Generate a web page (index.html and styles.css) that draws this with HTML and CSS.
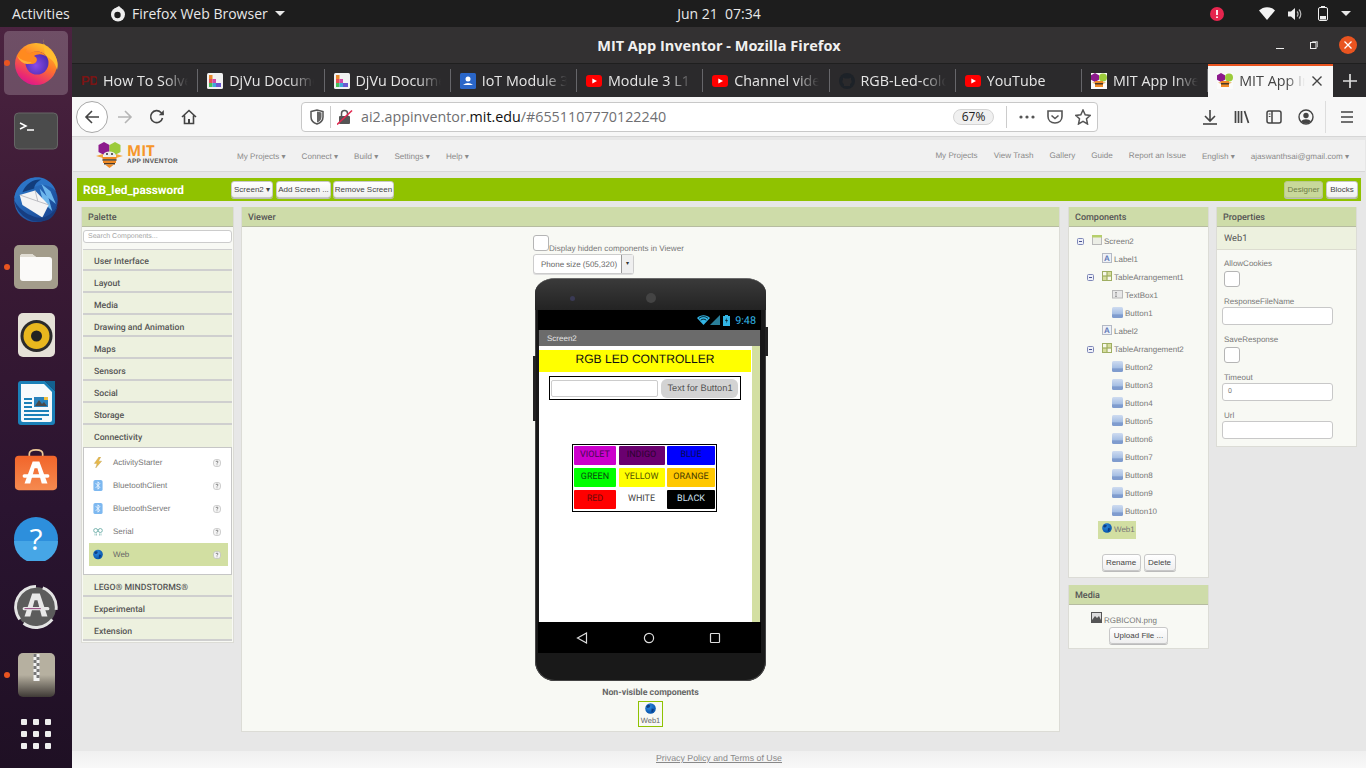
FILE: index.html
```html
<!DOCTYPE html>
<html lang="en">
<head>
<meta charset="utf-8">
<title>MIT App Inventor - Mozilla Firefox</title>
<link rel="stylesheet" href="styles.css">
</head>
<body>
<svg class="defs" width="0" height="0" aria-hidden="true">
  <defs>
    <linearGradient id="btnG" x1="0" y1="0" x2="0" y2="1"><stop offset="0" stop-color="#cfdcf0"/><stop offset=".65" stop-color="#a3bde3"/><stop offset=".7" stop-color="#7f9cce"/><stop offset="1" stop-color="#7f9cce"/></linearGradient>
    <radialGradient id="globeG" cx=".4" cy=".35" r=".7"><stop offset="0" stop-color="#2f8be0"/><stop offset="1" stop-color="#0350a8"/></radialGradient>
    <linearGradient id="ffBody" x1=".8" y1="0" x2=".3" y2="1"><stop offset="0" stop-color="#ffcf30"/><stop offset=".45" stop-color="#ff7a28"/><stop offset=".85" stop-color="#ea2a72"/><stop offset="1" stop-color="#d9168f"/></linearGradient>
    <radialGradient id="ffGlobe" cx=".45" cy=".6" r=".6"><stop offset="0" stop-color="#8a4be8"/><stop offset="1" stop-color="#4c2bb0"/></radialGradient>
    <linearGradient id="tbG" x1="0" y1="0" x2="1" y2="1"><stop offset="0" stop-color="#2f7fd0"/><stop offset="1" stop-color="#163f8c"/></linearGradient>
    <linearGradient id="swG" x1="0" y1="0" x2="0" y2="1"><stop offset="0" stop-color="#f2652a"/><stop offset="1" stop-color="#f58a50"/></linearGradient>
    <symbol id="i-btn" viewBox="0 0 11 11"><rect x="0" y="0" width="11" height="11" rx="1.500" fill="url(#btnG)"/></symbol>
    <symbol id="i-label" viewBox="0 0 10 10"><rect x=".5" y=".5" width="9" height="9" fill="#eef1f7" stroke="#b4b9c4"/><text x="5" y="8" class="i-label-a">A</text></symbol>
    <symbol id="i-table" viewBox="0 0 10 10"><rect width="10" height="10" fill="#9fae62"/><rect x="1" y="1" width="3.400" height="3.400" fill="#f7f7ea"/><rect x="5.600" y="1" width="3.400" height="3.400" fill="#d6de9c"/><rect x="1" y="5.600" width="3.400" height="3.400" fill="#d6de9c"/><rect x="5.600" y="5.600" width="3.400" height="3.400" fill="#f7f7ea"/></symbol>
    <symbol id="i-exp" viewBox="0 0 7 7"><rect x=".5" y=".5" width="6" height="6" rx="1" fill="#eef0f8" stroke="#7f88b8"/><path d="M2 3.500h3" stroke="#4b5590"/></symbol>
    <symbol id="i-globe" viewBox="0 0 11 11"><circle cx="5.500" cy="5.500" r="5.300" fill="url(#globeG)"/><path d="M3 1.600 5.400 2.600 4.600 4.600 2.400 5 1.200 3.600ZM6.600 5.600 9 6 8 8.600 6.400 9.600Z" fill="#0a2f70" opacity=".8"/></symbol>
    <symbol id="i-bt" viewBox="0 0 10 12"><rect width="10" height="12" rx="2" fill="#7db8f0"/><path d="M2.500 3.500 7 8 5 10V2L7 4 2.500 8.500" fill="none" stroke="#eef6ff" stroke-width="1"/></symbol>
    <symbol id="i-q" viewBox="0 0 8 8"><rect x=".5" y=".5" width="7" height="7" rx="2.500" fill="#f4f4f4" stroke="#bdbdbd" stroke-width=".7"/><path d="M3 3c0-1.300 2-1.300 2 0 0 .8-1 .7-1 1.600M4 5.500v.7" fill="none" stroke="#666" stroke-width=".8"/></symbol>
    <symbol id="i-yt" viewBox="0 0 16 12"><rect width="16" height="12" rx="3" fill="#f00"/><path d="M6.300 3.500 11 6 6.300 8.500Z" fill="#fff"/></symbol>
    <symbol id="i-djvu" viewBox="0 0 16 16"><rect width="16" height="16" rx="1.500" fill="#f1f1f1"/><rect x="2" y="2" width="3.500" height="4" fill="#e88a2e"/><rect x="2" y="6" width="3.500" height="4" fill="#e85050"/><rect x="5.500" y="6" width="3.500" height="4" fill="#d048a8"/><rect x="2" y="10" width="3.500" height="4" fill="#48c058"/><rect x="5.500" y="10" width="3.500" height="4" fill="#40a8d8"/><rect x="9" y="10" width="5" height="4" fill="#6a58d0"/></symbol>
    <symbol id="i-mit" viewBox="0 0 16 16"><rect width="16" height="16" fill="#fbfbfb"/><path d="M4 0 8 2.300V6.700L4 9 0 6.700V2.300Z" fill="#8d1a8d"/><circle cx="12" cy="4.500" r="4" fill="#9ccb3b"/><rect x="4" y="8" width="8" height="6" fill="#f08a24"/><rect x="4" y="10" width="8" height="1.500" fill="#4a3a2a"/><path d="M1 9.500 4 9V11ZM15 9.500 12 9V11Z" fill="#f0b060"/></symbol>
  </defs>
</svg>

<header class="topbar">
  <div class="top-left">
    <span class="activities">Activities</span>
    <span class="app-name">
      <svg class="app-ico" viewBox="0 0 16 16"><circle cx="8" cy="8.500" r="7" fill="#eee"/><circle cx="7.500" cy="9" r="3.200" fill="#1d1d1d"/><path d="M9 0 12 3 7 5 4 3Z" fill="#eee"/></svg>
      Firefox Web Browser
      <span class="caret"></span>
    </span>
  </div>
  <div class="clock">Jun 21&nbsp;&nbsp;07:34</div>
  <div class="top-right">
    <svg class="tray tray-err" viewBox="0 0 14 14"><circle cx="7" cy="7" r="7" fill="#e6254e"/><path d="M7 3v5M7 9.500v1.500" stroke="#fff" stroke-width="1.800"/></svg>
    <svg class="tray tray-wifi" viewBox="0 0 16 13"><path d="M0 3.500C4.500-1 11.500-1 16 3.500L8 13Z" fill="#f4f4f4"/></svg>
    <svg class="tray tray-vol" viewBox="0 0 15 14"><path d="M0 4.500H3L7 1V13L3 9.500H0Z" fill="#eee"/><path d="M9 4.500a3.500 3.500 0 0 1 0 5M11 2.500a6.500 6.500 0 0 1 0 9" fill="none" stroke="#bbb" stroke-width="1.200"/></svg>
    <svg class="tray tray-bat" viewBox="0 0 10 15"><path d="M3 0h4v1.500H3Z" fill="#eee"/><rect x=".5" y="1.500" width="9" height="13" rx="1.500" fill="#1d1d1d" stroke="#eee"/><rect x="2" y="10" width="6" height="3.500" fill="#eee"/></svg>
    <span class="caret caret-right"></span>
  </div>
</header>

<div class="desktop">
  <nav class="dock">
    <div class="dock-item dock-active running">
      <svg class="ic48 ff-ico" viewBox="0 0 48 48">
        <circle cx="24" cy="26" r="21" fill="url(#ffBody)"/>
        <path d="M31 1C30 8 38 10 42 16 46 22 46.500 27 45 32 43 24 39 20 33 18Z" fill="#ffbd30"/>
        <circle cx="25" cy="25" r="11.500" fill="url(#ffGlobe)"/>
        <path d="M5 18C8 12 12 10 15 11 13 13 14 15 17 16 23 11 31 13 35 19 30 15 25 16 22 18 27 20 25 26 20 26 14 26 8 24 5 18Z" fill="#ff8a1f"/>
        <path d="M5 18C9 22 14 24 20 24 16 28 9 26 5 18Z" fill="#ffb03a"/>
      </svg>
    </div>
    <div class="dock-item">
      <svg class="ic44" viewBox="0 0 44 44"><rect x=".5" y="4" width="43" height="36" rx="4" fill="#4b4b4b" stroke="#666"/><path d="M6 14l6 3-6 3" fill="none" stroke="#fff" stroke-width="1.500"/><path d="M13 21h7" stroke="#fff" stroke-width="1.500"/></svg>
    </div>
    <div class="dock-item">
      <svg class="ic48" viewBox="0 0 48 53">
        <circle cx="24" cy="28" r="24" fill="url(#tbG)"/>
        <path d="M0 26C2 10 16 0 30 3 38 5 44 11 46 18 38 10 30 10 23 13L6 21Z" fill="#2c74c6"/>
        <path d="M9 19C13 9 22 4 30 5 24 8 22 12 22 15Z" fill="#123d7c"/>
        <path d="M30 10 40 18 46 32 36 24ZM28 15 38 26 42 40 32 30Z" fill="#6db6ec"/>
        <path d="M6 22 23 17 38 33 31 47 9 33Z" fill="#f4f4f4"/>
        <path d="M6 22 26 29 38 33M26 29 23 17" fill="none" stroke="#a9a9b0" stroke-width=".8"/>
        <path d="M0 28C2 44 20 56 36 50 42 48 46 42 48 34 42 44 32 50 22 46 12 43 4 36 0 28Z" fill="#173d80"/>
      </svg>
    </div>
    <div class="dock-item running">
      <svg class="ic44" viewBox="0 0 44 44"><rect width="44" height="44" rx="5" fill="#a39c8b"/><path d="M6 12q0-3 3-3H18l4 3H35q3 0 3 3V33q0 3-3 3H9q-3 0-3-3Z" fill="#fbfaf9"/><path d="M6 12q0-3 3-3H18l4 3Z" fill="#e0dcd3"/></svg>
    </div>
    <div class="dock-item">
      <svg class="ic44 ic-narrow" viewBox="0 0 37 44"><rect width="37" height="44" rx="5" fill="#e5e1d7"/><circle cx="18.500" cy="23" r="16" fill="#2b2b2b"/><circle cx="18.500" cy="23" r="13" fill="#e8b71e"/><circle cx="18.500" cy="23" r="5.500" fill="#222"/></svg>
    </div>
    <div class="dock-item">
      <svg class="ic44 ic-narrow" viewBox="0 0 37 44"><path d="M3 0H27L37 10V41Q37 44 34 44H3Q0 44 0 41V3Q0 0 3 0Z" fill="#1b80b8"/><path d="M3 3H26L34 11V39Q34 41 32 41H5Q3 41 3 39Z" fill="#f6fafc"/><path d="M27 0 37 0V10Z" fill="#13618f"/><path d="M6 17h8v2H6ZM6 21h8v2H6ZM6 25h8v2H6ZM6 29h25v2H6ZM6 33h25v2H6ZM6 37h18v2H6Z" fill="#1b80b8"/><rect x="16" y="16" width="14" height="10" fill="#2a82bc"/><path d="M17 25 21 19 24 23 26 21 29 25Z" fill="#4a4a4a"/><rect x="26" y="16" width="4" height="3" fill="#f0c040"/></svg>
    </div>
    <div class="dock-item">
      <svg class="ic44 sw-ico" viewBox="0 0 44 46"><path d="M15 8V5Q15 1 22 1T29 5V8" fill="none" stroke="#ecc896" stroke-width="1.800"/><rect y="7" width="44" height="36" rx="4" fill="url(#swG)"/><path d="M18.500 13H25.500L34 36H28L23.500 20H20.500L16 36H10Z" fill="#fff"/><rect x="8" y="26.500" width="28" height="3.500" rx="1.700" fill="#fff"/></svg>
    </div>
    <div class="dock-item">
      <svg class="ic44" viewBox="0 0 44 44"><circle cx="22" cy="22" r="22" fill="#2d8fdc"/><path d="M0 24H44A22 22 0 0 1 0 24Z" fill="#46a6e6"/><text x="22" y="33" class="help-q">?</text></svg>
    </div>
    <div class="dock-item">
      <svg class="ic44" viewBox="0 0 46 46"><circle cx="23" cy="23" r="21" fill="#5c5c5c"/><path d="M6 36A21.500 21.500 0 0 1 23 1.500M30 3A21.500 21.500 0 0 1 44 26M40 36A21.500 21.500 0 0 1 10 40" fill="none" stroke="#e4e4e4" stroke-width="3"/><path d="M19 9H27L35 33H29L24.500 16H21.500L17 33H11Z" fill="#e8e8e8"/><rect x="9" y="23" width="28" height="3.500" rx="1.700" fill="#e8e8e8"/><path d="M11 24.700H28" stroke="#8e3a78"/></svg>
    </div>
    <div class="dock-item running">
      <svg class="ic44 ic-narrow" viewBox="0 0 37 44"><defs><linearGradient id="zipG" x1="0" y1="0" x2="0" y2="1"><stop offset=".5" stop-color="#b6b0a0"/><stop offset="1" stop-color="#3f3a36"/></linearGradient></defs><rect width="37" height="44" rx="5" fill="url(#zipG)"/><path d="M15.500 1h6v27h-6Z" fill="#f2f2f2"/><path d="M15.500 1h3v3h-3ZM18.500 4h3v3h-3ZM15.500 7h3v3h-3ZM18.500 10h3v3h-3ZM15.500 13h3v3h-3ZM18.500 16h3v3h-3ZM15.500 19h3v3h-3ZM18.500 22h3v3h-3Z" fill="#777"/></svg>
    </div>
    <div class="dock-grid">
      <i></i><i></i><i></i><i></i><i></i><i></i><i></i><i></i><i></i>
    </div>
  </nav>

  <main class="window">
    <div class="titlebar">
      <span class="title-text">MIT App Inventor - Mozilla Firefox</span>
      <div class="win-ctrls">
        <span class="win-min"></span>
        <svg class="win-max" viewBox="0 0 8 8"><rect x=".5" y="1.500" width="5.500" height="6" fill="none" stroke="#eee"/><path d="M2.500 1V.5H7.500V6H6.500" fill="none" stroke="#aaa"/></svg>
        <span class="win-close"><svg viewBox="0 0 8 8"><path d="M.5.5 7.500 7.500M7.500.5.5 7.500" stroke="#fff" stroke-width="1.300"/></svg></span>
      </div>
    </div>

    <div class="tabs">
      <div class="tab"><span class="fav-pdf">PD</span><span class="tab-text">How To Solve</span></div>
      <div class="tab"><svg class="fav"><use href="#i-djvu"/></svg><span class="tab-text">DjVu Docume</span></div>
      <div class="tab"><svg class="fav"><use href="#i-djvu"/></svg><span class="tab-text">DjVu Docume</span></div>
      <div class="tab"><svg class="fav" viewBox="0 0 16 16"><rect width="16" height="16" rx="1.500" fill="#2a66c8"/><circle cx="8" cy="6" r="2.500" fill="#fff"/><path d="M3 12q5-4 10 0Z" fill="#fff"/></svg><span class="tab-text">IoT Module 3</span></div>
      <div class="tab"><svg class="fav"><use href="#i-yt"/></svg><span class="tab-text">Module 3 L1</span></div>
      <div class="tab"><svg class="fav"><use href="#i-yt"/></svg><span class="tab-text">Channel vide</span></div>
      <div class="tab"><svg class="fav" viewBox="0 0 16 16"><circle cx="8" cy="8" r="8" fill="#1d2228"/><path d="M5 13V11C3 10.500 3 8 4 6.500V4.500L6 5.500H10L12 4.500V6.500C13 8 13 10.500 11 11V13Z" fill="#2b2a2c"/></svg><span class="tab-text">RGB-Led-colo</span></div>
      <div class="tab"><svg class="fav"><use href="#i-yt"/></svg><span class="tab-text">YouTube</span></div>
      <div class="tab tab-last"><svg class="fav"><use href="#i-mit"/></svg><span class="tab-text">MIT App Inve</span></div>
      <div class="tab tab-active"><svg class="fav"><use href="#i-mit"/></svg><span class="tab-text tab-text-short">MIT App In</span><svg class="tab-x" viewBox="0 0 10 10"><path d="M.5.5 9.500 9.500M9.500.5.5 9.500" stroke="#444" stroke-width="1.400"/></svg></div>
      <div class="tab-new"><svg viewBox="0 0 14 14"><path d="M7 0V14M0 7H14" stroke="#ddd" stroke-width="1.700"/></svg></div>
    </div>

    <div class="toolbar">
      <button class="back"><svg viewBox="0 0 16 16"><path d="M15 8H2M8 2 2 8 8 14" fill="none" stroke="#444" stroke-width="1.600"/></svg></button>
      <span class="tb"><svg viewBox="0 0 16 16"><path d="M1 8H14M8 2 14 8 8 14" fill="none" stroke="#b5b5b5" stroke-width="1.600"/></svg></span>
      <span class="tb"><svg viewBox="0 0 16 16"><path d="M13.500 9A6 6 0 1 1 12 3.500L14.500 5.500" fill="none" stroke="#444" stroke-width="1.600"/><path d="M14.800 1V6.200H9.800Z" fill="#444"/></svg></span>
      <span class="tb"><svg viewBox="0 0 16 16"><path d="M1 8 8 1.500 15 8M3.500 6.500V14.500H12.500V6.500" fill="none" stroke="#444" stroke-width="1.600"/><rect x="7" y="10" width="2" height="4.500" fill="#444"/></svg></span>
      <div class="urlbar">
        <svg class="ub-shield" viewBox="0 0 14 16"><path d="M1 2.500 7 1 13 2.500V8C13 12 10 14 7 15 4 14 1 12 1 8Z" fill="none" stroke="#555" stroke-width="1.500"/><path d="M7 2.500V13.500C9.500 12.500 11.500 11 11.500 8V3.500Z" fill="#666"/></svg>
        <span class="ub-div"></span>
        <svg class="ub-lock" viewBox="0 0 16 16"><rect x="2" y="7" width="11" height="8" rx="1" fill="#555"/><path d="M4.500 7V4.500A3 3 0 0 1 10.500 4.500V7" fill="none" stroke="#555" stroke-width="1.500"/><path d="M0 15.500 15 1.500" stroke="#e22850" stroke-width="1.600"/></svg>
        <span class="url"><span class="url-dim">ai2.appinventor.</span><span class="url-main">mit.edu</span><span class="url-dim">/#6551107770122240</span></span>
        <span class="zoom-pill">67%</span>
        <span class="ub-div ub-div2"></span>
        <span class="ub-btn"><svg viewBox="0 0 16 4"><circle cx="2" cy="2" r="1.600" fill="#555"/><circle cx="8" cy="2" r="1.600" fill="#555"/><circle cx="14" cy="2" r="1.600" fill="#555"/></svg></span>
        <span class="ub-btn"><svg class="ub-16" viewBox="0 0 16 14"><path d="M1 1H15V6.500C15 10.500 12 13 8 13S1 10.500 1 6.500Z" fill="none" stroke="#555" stroke-width="1.600"/><path d="M4.500 5.500 8 8.500 11.500 5.500" fill="none" stroke="#555" stroke-width="1.600"/></svg></span>
        <span class="ub-btn"><svg class="ub-16" viewBox="0 0 16 16"><path d="M8 1 10.200 5.800 15.300 6.400 11.500 9.800 12.500 15 8 12.400 3.500 15 4.500 9.800.7 6.400 5.800 5.800Z" fill="none" stroke="#555" stroke-width="1.500"/></svg></span>
      </div>
      <span class="tb tb-first"><svg viewBox="0 0 16 16"><path d="M8 1V11M3 7 8 12 13 7" fill="none" stroke="#444" stroke-width="1.600"/><path d="M1 15H15" stroke="#444" stroke-width="1.600"/></svg></span>
      <span class="tb"><svg viewBox="0 0 16 16"><path d="M1.500 2V14M4.500 2V14M7.500 2V14M10.500 2 14.500 14" fill="none" stroke="#444" stroke-width="1.700"/></svg></span>
      <span class="tb"><svg viewBox="0 0 16 16"><rect x="1" y="2" width="14" height="12" rx="2" fill="none" stroke="#444" stroke-width="1.500"/><path d="M6 2V14" stroke="#444" stroke-width="1.500"/><path d="M2.800 5H4.500M2.800 7.500H4.500" stroke="#444"/></svg></span>
      <span class="tb"><svg viewBox="0 0 16 16"><circle cx="8" cy="8" r="7" fill="none" stroke="#444" stroke-width="1.400"/><circle cx="8" cy="6.500" r="2.700" fill="#444"/><path d="M3 12.500C5 9.500 11 9.500 13 12.500 10.500 15 5.500 15 3 12.500Z" fill="#444"/></svg></span>
      <span class="tb-div"></span>
      <span class="tb tb-last"><svg viewBox="0 0 16 16"><path d="M2 3H14M2 8H14M2 13H14" stroke="#444" stroke-width="1.700"/></svg></span>
    </div>

    <div class="page">
      <div class="app-menu">
        <div class="logo">
          <svg class="logo-ico" viewBox="0 0 27 27">
            <path d="M8 0 13.500 3V10L8 13 2.500 10V3Z" fill="#8d1a8d"/>
            <path d="M19 0 24.500 3V10L19 13 13.500 10V3Z" fill="#9ccb3b"/>
            <path d="M0 14 7 12V16ZM27 14 20 12V16Z" fill="#f3a63f"/>
            <ellipse cx="13.500" cy="12.500" rx="6" ry="3" fill="#ececec"/>
            <circle cx="11" cy="12" r="1" fill="#333"/><circle cx="16" cy="12" r="1" fill="#333"/>
            <rect x="6.500" y="15" width="14" height="2.200" fill="#f08a24"/>
            <rect x="6.500" y="17.200" width="14" height="1.600" fill="#4a3a2a"/>
            <rect x="7" y="18.800" width="13" height="2.200" fill="#f08a24"/>
            <rect x="8" y="21" width="11" height="1.500" fill="#4a3a2a"/>
            <path d="M9 22.500H18L13.500 26Z" fill="#f08a24"/>
          </svg>
          <div class="logo-text"><span class="logo-mit">MIT</span><span class="logo-sub">APP INVENTOR</span></div>
        </div>
        <div class="menu menu-left">
          <span>My Projects ▾</span><span>Connect ▾</span><span>Build ▾</span><span>Settings ▾</span><span>Help ▾</span>
        </div>
        <div class="menu menu-right">
          <span>My Projects</span><span>View Trash</span><span>Gallery</span><span>Guide</span><span>Report an Issue</span><span>English ▾</span><span>ajaswanthsai@gmail.com ▾</span>
        </div>
      </div>

      <div class="greenbar">
        <span class="proj-name">RGB_led_password</span>
        <button class="ai-btn btn-screen">Screen2 ▾</button>
        <button class="ai-btn btn-add">Add Screen ...</button>
        <button class="ai-btn btn-remove">Remove Screen</button>
        <div class="mode-btns">
          <button class="ai-btn btn-designer">Designer</button>
          <button class="ai-btn btn-blocks">Blocks</button>
        </div>
      </div>

      <div class="workspace">
        <section class="panel palette">
          <h2 class="panel-head">Palette</h2>
          <div class="search-wrap"><div class="search">Search Components...</div></div>
          <div class="cat cat-first">User Interface</div>
          <div class="cat">Layout</div>
          <div class="cat">Media</div>
          <div class="cat">Drawing and Animation</div>
          <div class="cat">Maps</div>
          <div class="cat">Sensors</div>
          <div class="cat">Social</div>
          <div class="cat">Storage</div>
          <div class="cat cat-open">Connectivity</div>
          <div class="cat-body">
            <div class="pal-item"><svg class="pal-ico" viewBox="0 0 10 12"><path d="M6 0 1 7H4L2.500 12 9 4.500H5.500L8 0Z" fill="#e8b94a" stroke="#b89a50" stroke-width=".4"/></svg><span class="pal-name">ActivityStarter</span><svg class="pal-q"><use href="#i-q"/></svg></div>
            <div class="pal-item"><svg class="pal-ico"><use href="#i-bt"/></svg><span class="pal-name">BluetoothClient</span><svg class="pal-q"><use href="#i-q"/></svg></div>
            <div class="pal-item"><svg class="pal-ico"><use href="#i-bt"/></svg><span class="pal-name">BluetoothServer</span><svg class="pal-q"><use href="#i-q"/></svg></div>
            <div class="pal-item"><svg class="pal-ico" viewBox="0 0 10 8"><circle cx="2.700" cy="3" r="2" fill="none" stroke="#79b5b0"/><circle cx="7.300" cy="3" r="2" fill="none" stroke="#79b5b0"/><path d="M2 6v2M3.500 6v2M6.500 6v2M8 6v2" stroke="#79b5b0" stroke-width=".7"/></svg><span class="pal-name">Serial</span><svg class="pal-q"><use href="#i-q"/></svg></div>
            <div class="pal-item pal-sel"><svg class="pal-ico"><use href="#i-globe"/></svg><span class="pal-name">Web</span><svg class="pal-q"><use href="#i-q"/></svg></div>
          </div>
          <div class="cat cat-after">LEGO® MINDSTORMS®</div>
          <div class="cat">Experimental</div>
          <div class="cat">Extension</div>
        </section>

        <section class="panel viewer">
          <h2 class="panel-head">Viewer</h2>
          <div class="viewer-body">
            <div class="viewer-col">
              <div class="hidden-row"><span class="check"></span><span class="hidden-text">Display hidden components in Viewer</span></div>
              <div class="size-select"><span class="size-label">Phone size (505,320)</span><span class="size-arrow">▾</span></div>
              <div class="phone">
                <span class="side-btn side-top"></span>
                <span class="side-btn side-left"></span>
                <div class="phone-top">
                  <span class="cam-small"></span>
                  <span class="cam-big"></span>
                </div>
                <div class="status">
                  <svg class="st-wifi" viewBox="0 0 13 10"><path d="M6.500 10 0 3C3.500-.8 9.500-.8 13 3Z" fill="#33b5e5"/><path d="M2 3.400C4.800 1 8.200 1 11 3.400M3.700 5.200C5.500 3.800 7.500 3.800 9.300 5.200" fill="none" stroke="#000" stroke-width=".8"/></svg>
                  <svg class="st-sig" viewBox="0 0 10 10"><path d="M10 0V10H0Z" fill="#2a7f9a"/></svg>
                  <svg class="st-bat" viewBox="0 0 7 11"><path d="M2 0H5V1H7V11H0V1H2Z" fill="#33b5e5"/><path d="M4 2.500 2 6H3.500L3 8.500 5 5H3.500Z" fill="#0a2a38"/></svg>
                  <span class="st-time">9:48</span>
                </div>
                <div class="screen-title">Screen2</div>
                <div class="screen">
                  <div class="screen-main">
                    <div class="label-yellow">RGB LED CONTROLLER</div>
                    <div class="pw-table">
                      <span class="pw-input"></span>
                      <span class="pw-btn">Text for Button1</span>
                    </div>
                    <div class="color-table">
                      <span class="cbtn c-violet">VIOLET</span><span class="cbtn c-indigo">INDIGO</span><span class="cbtn c-blue">BLUE</span>
                      <span class="cbtn c-green">GREEN</span><span class="cbtn c-yellow">YELLOW</span><span class="cbtn c-orange">ORANGE</span>
                      <span class="cbtn c-red">RED</span><span class="cbtn c-white">WHITE</span><span class="cbtn c-black">BLACK</span>
                    </div>
                  </div>
                  <div class="screen-scroll"></div>
                </div>
                <div class="navbar">
                  <svg class="nav-ico" viewBox="0 0 12 12"><path d="M10.500 1V11L1.500 6Z" fill="none" stroke="#ddd" stroke-width="1.200"/></svg>
                  <svg class="nav-ico" viewBox="0 0 12 12"><circle cx="6" cy="6" r="4.600" fill="none" stroke="#ddd" stroke-width="1.200"/></svg>
                  <svg class="nav-ico" viewBox="0 0 12 12"><rect x="1.500" y="1.500" width="9" height="9" rx=".8" fill="none" stroke="#ddd" stroke-width="1.200"/></svg>
                </div>
              </div>
              <div class="nonvis">Non-visible components</div>
              <div class="nonvis-item"><svg class="nv-ico"><use href="#i-globe"/></svg><span>Web1</span></div>
            </div>
          </div>
        </section>

        <div class="comp-col">
          <section class="panel components">
            <h2 class="panel-head">Components</h2>
            <div class="tree">
              <div class="node n-root"><svg class="exp"><use href="#i-exp"/></svg><svg class="t-ico" viewBox="0 0 10 10"><rect x=".5" y=".5" width="9" height="9" fill="#eceee6" stroke="#b8b8b8"/><rect width="10" height="2.500" fill="#b6cf6b"/></svg><span>Screen2</span></div>
              <div class="node n1"><svg class="t-ico"><use href="#i-label"/></svg><span>Label1</span></div>
              <div class="node n1e"><svg class="exp"><use href="#i-exp"/></svg><svg class="t-ico"><use href="#i-table"/></svg><span>TableArrangement1</span></div>
              <div class="node n2"><svg class="t-ico t-wide" viewBox="0 0 11 10"><rect x=".5" y="1" width="10" height="7.500" fill="#e8e8e8" stroke="#b8b8b8"/><path d="M3 3H5M4 3V7M3 7H5" stroke="#888" stroke-width=".7"/></svg><span>TextBox1</span></div>
              <div class="node n2"><svg class="t-ico t-wide"><use href="#i-btn"/></svg><span>Button1</span></div>
              <div class="node n1"><svg class="t-ico"><use href="#i-label"/></svg><span>Label2</span></div>
              <div class="node n1e"><svg class="exp"><use href="#i-exp"/></svg><svg class="t-ico"><use href="#i-table"/></svg><span>TableArrangement2</span></div>
              <div class="node n2"><svg class="t-ico t-wide"><use href="#i-btn"/></svg><span>Button2</span></div>
              <div class="node n2"><svg class="t-ico t-wide"><use href="#i-btn"/></svg><span>Button3</span></div>
              <div class="node n2"><svg class="t-ico t-wide"><use href="#i-btn"/></svg><span>Button4</span></div>
              <div class="node n2"><svg class="t-ico t-wide"><use href="#i-btn"/></svg><span>Button5</span></div>
              <div class="node n2"><svg class="t-ico t-wide"><use href="#i-btn"/></svg><span>Button6</span></div>
              <div class="node n2"><svg class="t-ico t-wide"><use href="#i-btn"/></svg><span>Button7</span></div>
              <div class="node n2"><svg class="t-ico t-wide"><use href="#i-btn"/></svg><span>Button8</span></div>
              <div class="node n2"><svg class="t-ico t-wide"><use href="#i-btn"/></svg><span>Button9</span></div>
              <div class="node n2"><svg class="t-ico t-wide"><use href="#i-btn"/></svg><span>Button10</span></div>
              <div class="node n1 n-sel"><svg class="t-ico"><use href="#i-globe"/></svg><span>Web1</span></div>
            </div>
            <div class="comp-btns">
              <button class="ai-btn btn-rename">Rename</button>
              <button class="ai-btn btn-delete">Delete</button>
            </div>
          </section>
          <section class="panel media">
            <h2 class="panel-head">Media</h2>
            <div class="media-row"><svg class="media-ico" viewBox="0 0 11 11"><rect width="11" height="11" fill="#555"/><rect x="1" y="1" width="9" height="7" fill="#ddd"/><path d="M1 8 4 4 6 6 8 4 10 8Z" fill="#555"/></svg><span>RGBICON.png</span></div>
            <button class="ai-btn btn-upload">Upload File ...</button>
          </section>
        </div>

        <section class="panel properties">
          <h2 class="panel-head">Properties</h2>
          <div class="prop-sub">Web1</div>
          <div class="prop-body">
            <div class="prop-name">AllowCookies</div>
            <span class="check prop-check"></span>
            <div class="prop-name">ResponseFileName</div>
            <div class="prop-input"></div>
            <div class="prop-name">SaveResponse</div>
            <span class="check prop-check"></span>
            <div class="prop-name">Timeout</div>
            <div class="prop-input">0</div>
            <div class="prop-name">Url</div>
            <div class="prop-input"></div>
          </div>
        </section>
      </div>

      <footer class="footer"><a>Privacy Policy and Terms of Use</a></footer>
    </div>
  </main>
</div>
</body>
</html>
```
FILE: styles.css
```css
* { box-sizing: border-box; }
html, body { margin: 0; padding: 0; }
body {
  width: 1366px; height: 768px; overflow: hidden;
  display: flex; flex-direction: column;
  font-family: "Liberation Sans", Arial, sans-serif;
  background: #1d1d1d;
}
.defs { position: absolute; }
svg { display: block; flex: none; }
button { font-family: inherit; margin: 0; padding: 0; }
h2 { margin: 0; }

/* top bar */
.topbar {
  height: 27px; flex: none; background: #1d1d1d; color: #e8e8e8;
  display: grid; grid-template-columns: 1fr auto 1fr; align-items: center;
  padding-left: 72px;
  font-family: "Open Sans", sans-serif; font-size: 14px;
  position: relative;
}
.top-left { display: flex; align-items: center; margin-left: -60px; }
.activities { width: 98px; }
.app-name { display: flex; align-items: center; }
.app-ico { width: 16px; height: 16px; margin-right: 6px; }
.caret { width: 0; height: 0; border: 5px solid transparent; border-top: 5px solid #e8e8e8; border-bottom: 0; margin-left: 7px; }
.clock { font-size: 14px; }
.top-right { display: flex; align-items: center; justify-content: flex-end; padding-right: 15px; }
.tray-err { width: 14px; height: 14px; margin-right: 35px; }
.tray-wifi { width: 16px; height: 13px; margin-right: 13px; }
.tray-vol { width: 15px; height: 14px; margin-right: 15px; }
.tray-bat { width: 10px; height: 15px; }
.caret-right { margin-left: 13px; }

/* desktop */
.desktop { flex: 1; display: flex; min-height: 0; }
.dock {
  width: 72px; flex: none; padding-top: 2px;
  background: linear-gradient(180deg, #4b2340 0, #3a1a34 30%, #2a1430 65%, #1f1024 100%);
  display: flex; flex-direction: column; align-items: center;
}
.dock-item {
  width: 64px; height: 68px; flex: none; position: relative;
  display: flex; align-items: center; justify-content: center;
}
.dock-active { background: rgba(255,255,255,.2); border-radius: 5px; height: 64px; margin: 2px 0; }
.ff-ico { margin-top: -2px; }
.sw-ico { height: 46px; }
.running::before {
  content: ""; position: absolute; left: 0; top: 50%;
  width: 6px; height: 6px; margin-top: -3px; border-radius: 50%; background: #e95420;
}
.ic48 { width: 48px; height: 48px; }
.ic44 { width: 44px; height: 44px; }
.ic-narrow { width: 37px; }
.help-q { font: 30px "Open Sans", sans-serif; fill: #fff; text-anchor: middle; }
.dock-grid {
  margin-top: 10px; display: grid; grid-template-columns: repeat(3, 6px); gap: 6px;
}
.dock-grid i { width: 6px; height: 6px; background: #eee; border-radius: 1px; }

/* window */
.window { flex: 1; min-width: 0; display: flex; flex-direction: column; }
.titlebar {
  height: 37px; flex: none; background: #333132; border-bottom: 1px solid #1f1f1f;
  display: flex; align-items: center; justify-content: center; position: relative;
  color: #f0f0f0; font: 700 14.5px "Open Sans", sans-serif;
}
.win-ctrls { position: absolute; right: 9px; top: 9px; display: flex; align-items: center; }
.win-min { width: 8px; height: 1px; background: #eee; margin-top: 6px; }
.win-max { width: 8px; height: 8px; margin-left: 26px; }
.win-close {
  width: 18px; height: 18px; margin-left: 21px; border-radius: 50%; background: #e95420;
  display: flex; align-items: center; justify-content: center;
}
.win-close svg { width: 8px; height: 8px; }

.tabs {
  height: 33px; flex: none; background: #2b2a2c; display: flex;
  font: 14.3px "Open Sans", sans-serif; color: #e6e6e6;
}
.tab {
  width: 126.25px; flex: none; display: flex; align-items: center; padding-left: 9px; position: relative;
}
.tab::after { content: ""; position: absolute; right: 0; top: 5px; bottom: 5px; width: 1px; background: #66666a; }
.tab-active {
  background: #f7f7f7; color: #444; border-top: 2px solid #e95420; width: 125px; padding-left: 9px; padding-bottom: 2px;
}
.tab-active::after { display: none; }
.fav { width: 16px; height: 16px; margin-right: 6px; }
.fav-pdf { width: 16px; margin-right: 6px; font: 700 13px "Liberation Sans", sans-serif; color: #7a1515; overflow: hidden; letter-spacing: -.5px; }
.tab-text {
  width: 85px; overflow: hidden; white-space: nowrap;
  -webkit-mask-image: linear-gradient(90deg, #000 72%, transparent 100%);
  mask-image: linear-gradient(90deg, #000 72%, transparent 100%);
}
.tab-text-short { width: 66px; }
.tab-x { width: 10px; height: 10px; margin-left: 7px; }
.tab-new { flex: 1; display: flex; align-items: center; justify-content: center; }
.tab-new svg { width: 14px; height: 14px; }

.toolbar {
  height: 40px; flex: none; background: #f7f7f7; display: flex; align-items: center; padding-left: 4px;
  border-bottom: 1px solid #d6d6d6;
}
.back {
  width: 32px; height: 32px; border-radius: 50%; border: 1px solid #a8a8a8; background: #fff;
  display: flex; align-items: center; justify-content: center; margin-right: 1px;
}
.back svg, .tb svg { width: 16px; height: 16px; }
.tb { width: 32px; height: 32px; display: flex; align-items: center; justify-content: center; flex: none; }
.tb-first { margin-left: 96px; }
.tb-div { width: 1px; height: 32px; background: #ddd; margin-left: 3px; }
.tb-last { margin-left: 5px; }
.urlbar {
  width: 797px; height: 30px; margin-left: 96px; flex: none; background: #fff;
  border: 1px solid #c8c8c8; border-radius: 4px; display: flex; align-items: center;
}
.ub-shield { width: 14px; height: 16px; margin-left: 8px; }
.ub-div { width: 1px; height: 22px; background: #ccc; margin-left: 6px; }
.ub-lock { width: 16px; height: 16px; margin-left: 6px; }
.url { margin-left: 8px; font: 14.3px "Open Sans", sans-serif; white-space: nowrap; }
.url-dim { color: #6f6f72; }
.url-main { color: #111; }
.zoom-pill {
  margin-left: auto; width: 41px; height: 16px; border-radius: 8px; background: #f0f0f0; border: 1px solid #d4d4d4;
  font: 12px/14px "Open Sans", sans-serif; color: #222; text-align: center;
}
.ub-div2 { margin-left: 12px; margin-right: 6px; }
.ub-btn { width: 28px; display: flex; justify-content: center; align-items: center; }
.ub-btn svg { width: 16px; height: 4px; }
.ub-btn .ub-16 { height: 16px; }

/* page */
.page { flex: 1; min-height: 0; background: #e7e7e7; display: flex; flex-direction: column; text-rendering: geometricPrecision; }
.app-menu {
  height: 32px; flex: none; margin: 3px 1px 0; background: #f1f1f1; border-bottom: 1px solid #d8d8d8;
  display: flex; align-items: center; padding-left: 23px; padding-right: 16px;
  font-size: 8.100px; color: #8a8a8a;
}
.logo { display: flex; align-items: center; width: 141px; flex: none; }
.logo-ico { width: 27px; height: 27px; }
.logo-text { display: flex; flex-direction: column; margin-left: 4px; }
.logo-mit { font: 700 15px/13px "Open Sans", sans-serif; color: #f6962a; }
.logo-sub { font: 700 6.500px/8px "Liberation Sans", sans-serif; color: #555; letter-spacing: .2px; white-space: nowrap; }
.menu { display: flex; gap: 16px; white-space: nowrap; }
.menu-right { margin-left: auto; }
.greenbar {
  height: 23px; flex: none; margin: 6px 5px 0; background: #90c200;
  display: flex; align-items: center; padding-left: 6px; padding-right: 3px;
}
.proj-name { width: 148px; color: #fff; font: 700 11.800px "Roboto", sans-serif; }
.ai-btn {
  height: 17px; border: 1px solid #c8c8c8; border-radius: 3px; background: linear-gradient(#fff, #efefef);
  font-size: 8px; color: #444; box-shadow: 0 1px 0 #bbb; white-space: nowrap;
}
.btn-screen { width: 42px; }
.btn-add { width: 55px; margin-left: 3px; }
.btn-remove { width: 61px; margin-left: 2px; }
.mode-btns { margin-left: auto; display: flex; gap: 3px; }
.btn-designer { width: 39px; background: #c8d89a; color: #6d7c46; border-color: #b8c98c; }
.btn-blocks { width: 32px; }

.workspace { flex: 1; min-height: 0; display: flex; align-items: flex-start; margin-top: 6px; padding-left: 9px; }
.panel { background: #f8f9f4; border: 1px solid #dcdcd6; border-top: 0; flex: none; }
.panel-head {
  height: 20px; background: #cedca9; border-bottom: 1px solid #b6bca0;
  font: 500 9px/22px "Roboto", sans-serif; color: #555; padding-left: 6px;
}

/* palette */
.palette { width: 153px; height: 436px; background: #f8f9f4; padding: 0; }
.search-wrap { padding: 3px 1px 6px 1px; }
.search {
  height: 13px; border: 1px solid #ccc; border-radius: 3px; background: #fff;
  font-size: 7px; line-height: 11px; color: #a5a5a5; padding-left: 4px; width: 149px;
}
.cat {
  height: 22px; margin: 0 1px 0 1px; width: 149px; background: #edf1df; border-bottom: 2px solid #cfcfcf;
  font: 500 8.700px/26px "Roboto", sans-serif; color: #555; padding-left: 11px;
}
.cat-first { height: 22px; border-top: 1px solid #cfcfcf; line-height: 24px; }
.cat-open { border-bottom: 0; height: 22px; }
.cat-after { height: 22px; }
.cat-body {
  width: 149px; margin: 0 1px; height: 128px; background: #fff; border: 1px solid #c6c6c6; padding: 3px 3px 0 5px;
}
.pal-item { height: 23px; display: flex; align-items: center; font-size: 8px; color: #777; padding-left: 4px; padding-right: 7px; }
.pal-sel { background: #d2dfa2; color: #666; }
.pal-ico { width: 10px; height: 11px; margin-right: 10px; }
.pal-name { flex: 1; }
.pal-q { width: 8px; height: 8px; }

/* viewer */
.viewer { width: 819px; height: 525px; margin-left: 7px; }
.viewer-body { display: flex; justify-content: center; padding-top: 8px; }
.viewer-col { width: 235px; display: flex; flex-direction: column; font-size: 8px; color: #777; }
.hidden-row { display: flex; height: 16px; white-space: nowrap; line-height: 9px; }
.hidden-text { margin-top: 9px; font-size: 8.100px; }
.check { display: block; width: 16px; height: 16px; background: #fff; border: 1px solid #b5b5b5; border-radius: 3px; flex: none; }
.size-select {
  margin-top: 3px; width: 101px; height: 20px; background: #fff; border: 1px solid #ccc; border-radius: 3px;
  display: flex; align-items: center; color: #666; box-shadow: 0 1px 0 #ddd;
}
.size-label { flex: 1; padding-left: 7px; }
.size-arrow { width: 12px; height: 100%; background: #efefef; border-left: 1px solid #999; text-align: center; line-height: 18px; color: #333; font-size: 6px; }

.phone {
  position: relative; margin: 4px 0 0 2px; width: 231px; height: 403px; padding-right: 2px;
  background: #191919; border-radius: 20px 20px 20px 20px / 15px 15px 20px 20px;
  border-top: 1px solid #6a6a6a; box-shadow: inset 0 0 0 1px #444;
  display: flex; flex-direction: column; align-items: center;
}
.side-btn { position: absolute; width: 3px; background: #222; }
.side-top { right: -2px; top: 48px; height: 29px; }
.side-left { left: -2px; top: 77px; height: 65px; }
.phone-top {
  height: 31px; width: 231px; flex: none; align-self: flex-start; border-radius: 20px 20px 0 0 / 15px 15px 0 0;
  background: linear-gradient(#3a3a3a, #232323);
  display: flex; align-items: center; padding: 7px 0 0 35px;
}
.cam-small { width: 5px; height: 5px; border-radius: 50%; background: #3a3a55; }
.cam-big { width: 10px; height: 10px; margin-left: 71px; border-radius: 50%; background: #444; }
.status {
  height: 20px; width: 223px; flex: none; background: #000; display: flex; align-items: center; justify-content: flex-end;
  color: #33b5e5; font: 10.800px "Roboto", sans-serif; padding-right: 5px;
}
.st-wifi { width: 13px; height: 10px; }
.st-sig { width: 10px; height: 10px; }
.st-bat { width: 7px; height: 11px; margin-left: 3px; }
.st-time { margin-left: 5px; }
.screen-title {
  height: 16px; width: 221px; flex: none; background: #6b6b6b; color: #e4e4e4; font-size: 8px; line-height: 17px; padding-left: 8px;
}
.screen { width: 221px; height: 276px; flex: none; background: #fff; display: flex; }
.screen-main { width: 213px; padding-top: 4px; }
.screen-scroll { width: 8px; background: #d3dfa2; }
.label-yellow { height: 22px; background: #ff0; color: #111; text-align: center; font-size: 12.100px; line-height: 19px; margin-right: 1px; }
.pw-table {
  margin: 4px 0 0 10px; width: 192px; height: 24px; border: 1px solid #000;
  display: flex; align-items: center; padding-left: 1px;
}
.pw-input { width: 107px; height: 17px; border: 1px solid #ccc; border-radius: 2px; background: #fff; }
.pw-btn {
  width: 77px; height: 19px; margin-left: 3px; border-radius: 6px; background: #d3d3d3; color: #555;
  font-size: 9.300px; line-height: 19px; text-align: center; white-space: nowrap; padding-left: 1px;
}
.color-table {
  margin: 44px 0 0 33px; width: 145px; height: 68px; border: 1px solid #000; padding: 1px;
  display: grid; grid-template-columns: 42px 46px 48px; grid-auto-rows: 19px; row-gap: 3px;
  justify-content: start; column-gap: 2.500px;
}
.cbtn { font: 9px/19px "Roboto", sans-serif; text-align: center; border-radius: 1px; color: #222; }
.c-violet { background: #c0c; color: #440a50; }
.c-indigo { background: #6a006f; color: #2a0330; }
.c-blue { background: #00f; color: #0a0a55; }
.c-green { background: #0f0; color: #0a4a10; }
.c-yellow { background: #ff0; color: #555500; }
.c-orange { background: #ffc800; color: #443a00; }
.c-red { background: #f00; color: #6a0a0a; }
.c-white { background: #fff; color: #444; }
.c-black { background: #000; color: #cfe0f0; }
.navbar {
  height: 31px; width: 223px; flex: none; background: #000; display: flex; align-items: center; justify-content: center; gap: 54.500px; padding-right: 2px;
}
.nav-ico { width: 12px; height: 12px; }
.nonvis { margin-top: 7px; text-align: center; font: 700 8.800px "Roboto", sans-serif; color: #666; }
.nonvis-item {
  width: 25px; height: 26px; margin: 3px auto 0; border: 1px solid #8fc202; display: flex; flex-direction: column; align-items: center; font-size: 7.500px; color: #666; padding-top: 0;
}
.nv-ico { width: 11px; height: 11px; margin: 1px 0 2px; }

/* components */
.comp-col { width: 141px; margin-left: 8px; flex: none; display: flex; flex-direction: column; gap: 7px; }
.components { height: 371px; }
.tree { padding-top: 6px; }
.node { height: 18px; display: flex; font-size: 8px; line-height: 18px; color: #777; white-space: nowrap; }
.node svg { margin-top: 2px; }
.exp { width: 7px; height: 7px; }
.node .exp { margin-top: 5px; }
.t-ico { width: 10px; height: 10px; margin-right: 2px; }
.t-wide { width: 11px; height: 11px; margin-right: 2px; }
.n-root { padding-left: 8px; }
.n-root .exp { margin-right: 8px; }
.n1 { padding-left: 33px; }
.n1e { padding-left: 18px; }
.n1e .exp { margin-right: 8px; }
.n2 { padding-left: 43px; }
.n-sel { background: #d2dfa2; width: 38px; margin-left: 29px; padding-left: 4px; }
.i-label-a { font: 700 8px "Liberation Sans", sans-serif; fill: #5f79b5; text-anchor: middle; }
.comp-btns { display: flex; gap: 3px; justify-content: center; margin-top: 15px; }
.btn-rename { width: 39px; }
.btn-delete { width: 32px; }
.media { height: 64px; }
.media-row { display: flex; align-items: flex-start; font-size: 8px; color: #777; padding: 7px 0 0 22px; height: 22px; }
.media-ico { width: 11px; height: 11px; margin-right: 2px; }
.media-row span { line-height: 17px; }
.btn-upload { display: block; width: 59px; margin: 0 0 0 40px; }

/* properties */
.properties { width: 141px; height: 240px; margin-left: 7px; }
.prop-sub { height: 23px; background: #edf1df; border-bottom: 1px solid #dcdcd0; font: 400 9.300px/24px "Roboto", sans-serif; color: #555; padding-left: 7px; }
.prop-body { padding: 6px 0 0 5px; }
.prop-name { height: 13px; font-size: 8px; line-height: 16px; color: #777; padding-left: 2px; }
.prop-check { margin: 2px 0 7px 2px; }
.prop-input {
  width: 111px; height: 18px; background: #fff; border: 1px solid #c8c8c8; border-radius: 3px; margin-bottom: 7px;
  font-size: 7px; line-height: 16px; color: #777; padding-left: 5px;
}

/* footer */
.footer { height: 17px; flex: none; background: linear-gradient(#f0f0f0, #f8f8f8); text-align: center; font-size: 8.800px; line-height: 15px; color: #888; }
.footer a { text-decoration: underline; }
```
